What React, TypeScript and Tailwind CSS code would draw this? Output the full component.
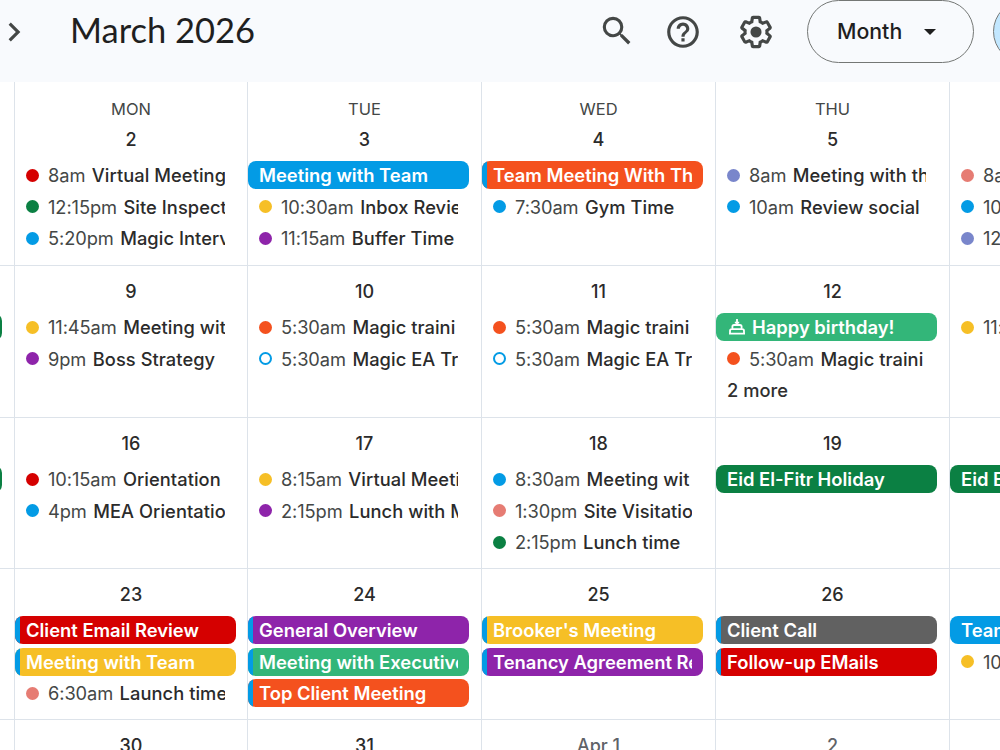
import clsx from 'clsx'
import { MdChevronRight, MdHelpOutline, MdSearch } from 'react-icons/md'

type Color = 'tomato' | 'basil' | 'peacock' | 'banana' | 'grape' | 'tangerine' | 'lavender' | 'flamingo' | 'sage' | 'graphite'

interface CalendarEvent {
  readonly kind: 'timed' | 'invite' | 'block' | 'birthday' | 'more'
  readonly color?: Color
  readonly time?: string
  readonly title: string
  /** Shows the calendar's own color as a strip on the left of the block. */
  readonly strip?: boolean
}

interface Day {
  readonly label: string
  readonly weekday?: string
  readonly muted?: boolean
  readonly events: readonly CalendarEvent[]
}

const COLORS: Record<Color, string> = {
  tomato: 'bg-[#d50000]',
  basil: 'bg-[#0b8043]',
  peacock: 'bg-[#039be5]',
  banana: 'bg-[#f6bf26]',
  grape: 'bg-[#8e24aa]',
  tangerine: 'bg-[#f4511e]',
  lavender: 'bg-[#7986cb]',
  flamingo: 'bg-[#e67c73]',
  sage: 'bg-[#33b679]',
  graphite: 'bg-[#616161]',
}

const timed = (color: Color, time: string, title: string): CalendarEvent => ({ kind: 'timed', color, time, title })
const invite = (time: string, title: string): CalendarEvent => ({ kind: 'invite', time, title })
const block = (color: Color, title: string, strip = false): CalendarEvent => ({ kind: 'block', color, title, strip })

const WEEKS: readonly (readonly Day[])[] = [
  [
    { label: '', events: [] },
    {
      weekday: 'MON',
      label: '2',
      events: [
        timed('tomato', '8am', 'Virtual Meeting'),
        timed('basil', '12:15pm', 'Site Inspection'),
        timed('peacock', '5:20pm', 'Magic Interview'),
      ],
    },
    {
      weekday: 'TUE',
      label: '3',
      events: [
        block('peacock', 'Meeting with Team'),
        timed('banana', '10:30am', 'Inbox Review'),
        timed('grape', '11:15am', 'Buffer Time'),
      ],
    },
    {
      weekday: 'WED',
      label: '4',
      events: [block('tangerine', 'Team Meeting With Th', true), timed('peacock', '7:30am', 'Gym Time')],
    },
    {
      weekday: 'THU',
      label: '5',
      events: [timed('lavender', '8am', 'Meeting with the'), timed('peacock', '10am', 'Review social')],
    },
    {
      weekday: 'FRI',
      label: '6',
      events: [timed('flamingo', '8am', ''), timed('peacock', '10am', ''), timed('lavender', '12pm', '')],
    },
  ],
  [
    { label: '', events: [block('basil', '')] },
    { label: '9', events: [timed('banana', '11:45am', 'Meeting with'), timed('grape', '9pm', 'Boss Strategy')] },
    { label: '10', events: [timed('tangerine', '5:30am', 'Magic traini'), invite('5:30am', 'Magic EA Tr')] },
    { label: '11', events: [timed('tangerine', '5:30am', 'Magic traini'), invite('5:30am', 'Magic EA Tr')] },
    {
      label: '12',
      events: [
        { kind: 'birthday', color: 'sage', title: 'Happy birthday!' },
        timed('tangerine', '5:30am', 'Magic traini'),
        { kind: 'more', title: '2 more' },
      ],
    },
    { label: '13', events: [timed('banana', '11:15am', '')] },
  ],
  [
    { label: '', events: [block('basil', '')] },
    { label: '16', events: [timed('tomato', '10:15am', 'Orientation'), timed('peacock', '4pm', 'MEA Orientation')] },
    { label: '17', events: [timed('banana', '8:15am', 'Virtual Meeting'), timed('grape', '2:15pm', 'Lunch with Me')] },
    {
      label: '18',
      events: [
        timed('peacock', '8:30am', 'Meeting wit'),
        timed('flamingo', '1:30pm', 'Site Visitation'),
        timed('basil', '2:15pm', 'Lunch time'),
      ],
    },
    { label: '19', events: [block('basil', 'Eid El-Fitr Holiday')] },
    { label: '20', events: [block('basil', 'Eid El-Fitr Holiday')] },
  ],
  [
    { label: '', events: [] },
    {
      label: '23',
      events: [
        block('tomato', 'Client Email Review', true),
        block('banana', 'Meeting with Team', true),
        timed('flamingo', '6:30am', 'Launch time'),
      ],
    },
    {
      label: '24',
      events: [
        block('grape', 'General Overview', true),
        block('sage', 'Meeting with Executive', true),
        block('tangerine', 'Top Client Meeting', true),
      ],
    },
    { label: '25', events: [block('banana', "Brooker's Meeting", true), block('grape', 'Tenancy Agreement Re', true)] },
    { label: '26', events: [block('graphite', 'Client Call', true), block('tomato', 'Follow-up EMails', true)] },
    { label: '27', events: [block('peacock', 'Team Meeting'), timed('banana', '10am', '')] },
  ],
  [
    { label: '', events: [] },
    { label: '30', events: [] },
    { label: '31', events: [] },
    { label: 'Apr 1', muted: true, events: [] },
    { label: '2', muted: true, events: [] },
    { label: '3', muted: true, events: [] },
  ],
]

const WEEK_HEIGHTS = ['h-[183px]', 'h-[152px]', 'h-[151px]', 'h-[151px]', 'h-[152px]']

export default function App() {
  return (
    <div className="flex h-[750px] w-[1000px] flex-col overflow-hidden bg-white font-['Inter',sans-serif] text-[#1f1f1f]">
      <Toolbar />
      <main className="-ml-[220px] flex w-[1403px] flex-col">
        {WEEKS.map((days, index) => (
          <div
            key={days[1].label}
            className={clsx(
              'grid shrink-0 grid-cols-[234px_233px_234px_234px_234px_234px]',
              WEEK_HEIGHTS[index],
              index > 0 && 'border-t border-[#dde3ea]',
            )}
          >
            {days.map((day) => (
              <DayCell key={day.label} day={day} />
            ))}
          </div>
        ))}
      </main>
    </div>
  )
}

function Toolbar() {
  return (
    <header className="flex h-[82px] shrink-0 items-start bg-[#f8fafd] text-[#444746]">
      <MdChevronRight className="-ml-[5px] mt-[13px] size-[38px] shrink-0" aria-hidden />
      <h1 className="ml-[37px] mt-[8px] w-[528px] shrink-0 font-['Lato',sans-serif] text-[34.5px] leading-[44px] text-[#1f1f1f]">
        March 2026
      </h1>
      <MdSearch className="mt-[12px] size-[38px] shrink-0" aria-hidden />
      <MdHelpOutline className="ml-[28px] mt-[13px] size-[38px] shrink-0" aria-hidden />
      <SettingsIcon />
      <button
        type="button"
        className="ml-[32px] flex h-[63px] w-[167px] shrink-0 items-center rounded-full border border-[#747775] pl-[29px] text-[21.3px] font-medium text-[#1f1f1f]"
      >
        Month
        <svg viewBox="0 0 12 6" className="ml-[22px] mt-[1px] h-[6px] w-[12px]" fill="currentColor" aria-hidden>
          <path d="M0 0h12L6 6z" />
        </svg>
      </button>
      <div className="ml-[19px] h-[63px] w-[70px] shrink-0 rounded-full border border-[#747775] bg-[#c2e7ff]" />
    </header>
  )
}

function DayCell({ day }: { day: Day }) {
  return (
    <section className="flex min-w-0 flex-col border-l border-[#dde3ea]">
      {day.weekday ? (
        <p className="mt-[16px] text-center text-[16.5px] leading-[22px] text-[#444746]">{day.weekday}</p>
      ) : null}
      <h2
        className={clsx(
          'h-[24px] text-center text-[18px] font-medium leading-[24px]',
          day.weekday ? 'mt-[8px]' : 'mt-[14px]',
          day.muted ? 'text-[#5f6368]' : 'text-[#2b2b2b]',
        )}
      >
        {day.label}
      </h2>
      <div className="mt-[9px] flex flex-col gap-[3.7px]">
        {day.events.map((event) => (
          <EventRow key={`${event.time}-${event.title}-${event.color}`} event={event} />
        ))}
      </div>
    </section>
  )
}

function EventRow({ event }: { event: CalendarEvent }) {
  const { kind, color, time, title, strip } = event

  if (kind === 'more') {
    return <p className="pl-[11px] text-[18.3px] font-medium leading-[28px] text-[#303030]">{title}</p>
  }

  if (kind === 'block' || kind === 'birthday') {
    return (
      <div className={clsx('flex h-[28px] w-[220.5px] overflow-hidden rounded-[8px]', color && COLORS[color])}>
        {strip ? <span className="w-[5px] shrink-0 bg-[#039be5]" /> : null}
        <div
          className={clsx(
            'mr-[11px] flex min-w-0 items-center overflow-hidden whitespace-nowrap text-[18.4px] font-semibold leading-[28px] text-white',
            strip ? 'ml-[6px]' : 'ml-[11px]',
          )}
        >
          {kind === 'birthday' ? <CakeIcon /> : null}
          {title}
        </div>
      </div>
    )
  }

  return (
    <div className="flex h-[28px] w-[210px] items-center overflow-hidden whitespace-nowrap pl-[11px] text-[18.3px] leading-[28px]">
      <span
        className={clsx(
          'mr-[9px] size-[13px] shrink-0 rounded-full',
          kind === 'invite' ? 'border-2 border-[#039be5] bg-white' : color && COLORS[color],
        )}
      />
      <span className="mr-[6.5px] tracking-[-0.1px] text-[#444746]">{time}</span>
      <span className="font-medium tracking-[0.06px] text-[#2b2b2b]">{title}</span>
    </div>
  )
}

function CakeIcon() {
  return (
    <svg viewBox="0 0 16 16" className="ml-[2px] mr-[7px] size-[16px] shrink-0" fill="none" stroke="currentColor" strokeWidth={1.8} aria-hidden>
      <path d="M8 0v6M5.8 3.6h4.4M3.4 10V7.6q0-1.6 1.6-1.6h6q1.6 0 1.6 1.6V10M1 14.6v-2.8q0-1.6 1.6-1.6h10.8q1.6 0 1.6 1.6v2.8zM0 14.6h16" />
    </svg>
  )
}

function SettingsIcon() {
  return (
    <svg viewBox="0 0 24 24" className="ml-[35px] mt-[13px] size-[38px] shrink-0" fill="currentColor" aria-hidden>
      <path d="M13.85 22.25h-3.7c-.74 0-1.36-.54-1.45-1.27l-.27-1.89c-.27-.14-.53-.29-.79-.46l-1.8.72c-.7.26-1.47-.03-1.81-.65L2.2 15.53c-.35-.66-.2-1.44.36-1.88l1.53-1.19c-.01-.15-.02-.3-.02-.46 0-.15.01-.31.02-.46l-1.52-1.19c-.59-.45-.74-1.26-.37-1.88l1.85-3.19c.34-.62 1.11-.9 1.79-.63l1.81.73c.26-.17.52-.32.78-.46l.27-1.91c.09-.7.71-1.25 1.44-1.25h3.7c.74 0 1.36.54 1.45 1.27l.27 1.89c.27.14.53.29.79.46l1.8-.72c.71-.26 1.48.03 1.82.65l1.84 3.18c.36.66.2 1.44-.36 1.88l-1.52 1.19c.01.15.02.3.02.46s-.01.31-.02.46l1.52 1.19c.56.45.72 1.23.37 1.86l-1.86 3.22c-.34.62-1.11.9-1.8.63l-1.8-.72c-.26.17-.52.32-.78.46l-.27 1.91c-.1.68-.72 1.22-1.46 1.22zm-3.23-2h2.76l.37-2.55.53-.22c.44-.18.88-.44 1.34-.78l.45-.34 2.38.96 1.38-2.4-2.03-1.58.07-.56c.03-.26.06-.51.06-.78s-.03-.53-.06-.78l-.07-.56 2.03-1.58-1.39-2.4-2.39.96-.45-.35c-.42-.32-.87-.58-1.33-.77l-.52-.22-.37-2.55h-2.76l-.37 2.55-.53.21c-.44.19-.88.44-1.34.79l-.45.33-2.38-.95-1.39 2.39 2.03 1.58-.07.56a7 7 0 0 0-.06.79c0 .26.02.53.06.78l.07.56-2.03 1.58 1.38 2.4 2.39-.96.45.35c.43.33.86.58 1.33.77l.53.22.38 2.55z" />
      <circle cx="12" cy="12" r="3.5" />
    </svg>
  )
}
